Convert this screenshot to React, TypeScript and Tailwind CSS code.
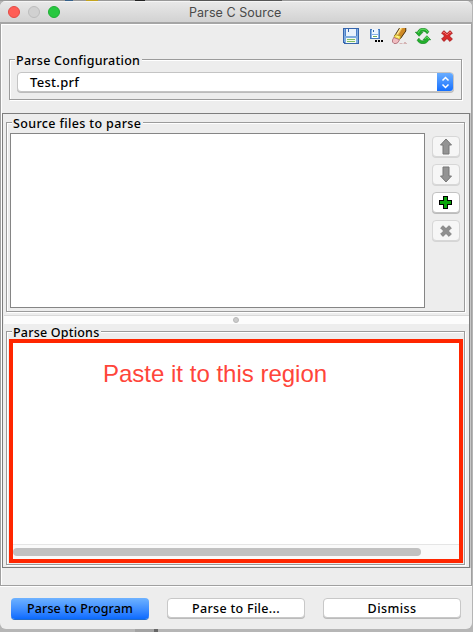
import React from "react";

const ui = "font-['Noto_Sans','Open_Sans',sans-serif] font-medium text-black whitespace-nowrap";
const etched = "border border-[#9b9b9b] shadow-[inset_1px_1px_0_#fff,1px_1px_0_#fff]";

function Group({ title, className, children, titleClass }: { title: string; className: string; titleClass: string; children: React.ReactNode }) {
  return (
    <section className={`${etched} ${className} flex flex-col`}>
      <div className={`${ui} -mt-[8px] h-[16px] shrink-0 self-start bg-[#ededed] text-[12.5px] leading-[17px] ${titleClass}`}>{title}</div>
      {children}
    </section>
  );
}

function SaveIcon() {
  return (
    <svg width="16" height="16" viewBox="0 0 16 16" shapeRendering="crispEdges">
      <path d="M0 0h15l1 1v15H1L0 15z" fill="#3565ad" />
      <path d="M1 1h14v14H2L1 14z" fill="#7eabe0" />
      <path d="M3 1h10v7H3z" fill="#e9f2fc" />
      <path d="M2 1h1v7H2zM13 1h1v7h-1z" fill="#4d80c8" />
      <path d="M5 1h1v3H5z" fill="#3565ad" />
      <path d="M3 10h10v5H3z" fill="#f4faed" />
      <path d="M4 11h8v1H4zM4 13h8v1H4z" fill="#82bd64" />
    </svg>
  );
}

function SaveAsIcon() {
  return (
    <svg width="14" height="16" viewBox="0 0 14 16" shapeRendering="crispEdges">
      <path d="M0 1h10v10H0z" fill="#477abd" />
      <path d="M1 2h8v8H1z" fill="#86b2e5" />
      <path d="M2 1h6v5H2z" fill="#edf5ff" />
      <path d="M3 2h1v2H3z" fill="#356aaa" />
      <path d="M2 7h6v3H2z" fill="#fff" />
      <path d="M3 8h4v1H3z" fill="#6eac58" />
      <path d="M5 12h2v2H5zM8 12h2v2H8zM11 12h2v2h-2z" fill="#000" />
    </svg>
  );
}

function EraserIcon() {
  return (
    <svg width="16" height="16" viewBox="0 0 16 16">
      <path d="M7.5 0h3.2L5 8.5 2.5 8z" fill="#f7c95c" />
      <path d="M10.5 0H14v3L8.5 11 5 8.5z" fill="#d08a24" />
      <path d="M8.8 0 4.5 7" stroke="#fff0a8" fill="none" />
      <path d="M7.5 0 2.5 8M13.8 0v3L8.5 10.5" stroke="#3d2a12" fill="none" strokeWidth=".9" />
      <path d="M3.2 6.5 9 8l-1.5 3.8L1.8 9.5z" fill="#f6e04a" stroke="#8d7220" strokeWidth=".5" />
      <path d="m4.5 8.3 2.5 1" stroke="#fff8b8" />
      <path d="M1.8 9.5 7.5 11.7 6 14.5 4 15.5H2L.5 14v-2z" fill="#f0bcc0" stroke="#a96670" strokeWidth=".8" />
      <path d="M7.5 15.5h3M11.5 15.5H15M12 14.5h2" stroke="#d5b5b5" />
    </svg>
  );
}

function RefreshIcon() {
  return (
    <svg width="16" height="16" viewBox="0 0 16 16" fill="#22b02c" stroke="#0a7d16" strokeWidth=".6">
      <path d="M.3 4.2h2C3.2 1.5 5.5.3 8 .3c2.6 0 4.8 1.3 5.8 3.5l-1.7 2C11 4 9.800 3.200 8.300 3.200c-1.200 0-2 .3-2.400 1.100H7.900L4.100 8.300z" />
      <path d="M15.700 11.800h-2c-.9 2.700-3.200 3.900-5.700 3.900-2.600 0-4.800-1.300-5.800-3.500l1.700-2c1.100 1.800 2.300 2.600 3.800 2.600 1.200 0 2-.3 2.400-1.100H8.100l3.800-4z" />
      <path d="M3.300 4.800C4.200 2 6.200 1.200 8 1.200c2 0 3.700.8 4.600 2.500M9.900 11l2-2.300 2 2.300" fill="none" stroke="#77e873" strokeWidth=".8" />
    </svg>
  );
}

function CloseIcon() {
  return (
    <svg width="12" height="12" viewBox="0 0 12 12">
      <path d="M3 .7 6 3.6 9 .7 11.4 3 8.4 6l3 3L9 11.4 6 8.5l-3 2.9L.6 9l3-3-3-3z" fill="#d82b2b" stroke="#a21416" strokeWidth=".8" />
      <path d="m2 3 1-1 3 3 3-3 1 1" fill="none" stroke="#ef7770" strokeWidth=".9" />
    </svg>
  );
}

function SideButton({ children, enabled = false }: { children: React.ReactNode; enabled?: boolean }) {
  return (
    <button className={`flex h-[21px] w-[28px] items-center justify-center rounded-[4px] border ${enabled ? "border-[#c3c3c3] bg-white shadow-[0_1px_0_#bbb]" : "border-[#d7d7d7] bg-[#f6f6f6] shadow-[0_1px_0_#d5d5d5]"}`}>
      {children}
    </button>
  );
}

export default function App() {
  return (
    <main className="flex h-[632px] w-[473px] flex-col overflow-hidden bg-[#b5b5b5]">
      <div className="flex h-px shrink-0 bg-[#999]">
        <i className="ml-[65px] h-px w-[8px] bg-[#36618a]" />
        <i className="ml-[13px] h-px w-[12px] bg-[#c3a41e]" />
        <i className="ml-[37px] h-px w-[10px] bg-[#222]" />
        <i className="ml-[45px] h-px w-[92px] bg-[#555]" />
      </div>
      <div className="flex h-[628px] w-[472px] shrink-0 flex-col overflow-hidden rounded-[6px] bg-[#ededed]">
        <header className="flex h-[23px] shrink-0 items-center border-b-2 border-[#a5a5a5] bg-linear-to-b from-[#e9e9e9] to-[#d2d2d2] pl-[8px] shadow-[inset_0_1px_0_#f5f5f5]">
          <div className="mt-px flex gap-[8px]">
            <i className="size-[12px] rounded-full border border-[#e24b45] bg-[#ff5e56]" />
            <i className="size-[12px] rounded-full border border-[#bcbcbc] bg-[#d1d1d1]" />
            <i className="size-[12px] rounded-full border border-[#1fae34] bg-[#28c840]" />
          </div>
          <h1 className="ml-[129px] mt-[2px] whitespace-nowrap font-[Inter,sans-serif] text-[12.5px] leading-[16px] tracking-[0.06px] text-[#4a4a4a]">Parse C Source</h1>
        </header>

        <div className="flex h-[562px] shrink-0 flex-col border border-t-0 border-[#a0a0a0] pl-px pr-px shadow-[inset_1px_1px_0_#fff]">
          <div className="flex h-[35px] shrink-0 pl-[341px] pt-[4px]">
            <SaveIcon />
            <span className="ml-[11px]"><SaveAsIcon /></span>
            <span className="ml-[8px]"><EraserIcon /></span>
            <span className="ml-[7px]"><RefreshIcon /></span>
            <span className="ml-[10px] mt-[2px]"><CloseIcon /></span>
          </div>
          <Group title="Parse Configuration" className="ml-[7px] h-[41px] w-[453px] shrink-0" titleClass="ml-[5px] w-[127px] pl-px tracking-[0.26px]">
            <div className="ml-[7px] mt-[4px] flex h-[20px] w-[437px] shrink-0 overflow-hidden rounded-[4px] border border-[#c4c4c4] bg-white shadow-[0_1px_0_#bbb]">
              <span className={`${ui} flex-1 pl-[12px] text-[13px] leading-[19px] tracking-[0.3px]`}>Test.prf</span>
              <span className="-my-px -mr-px flex w-[17px] items-center justify-center bg-linear-to-b from-[#6db0ff] to-[#0a6bff]">
                <svg width="9" height="13" viewBox="0 0 9 13" fill="none" stroke="white" strokeWidth="1.5"><path d="m1.5 4.5 3-3 3 3M1.5 8.5l3 3 3-3" /></svg>
              </span>
            </div>
          </Group>

          <div className="mt-[13px] flex h-[455px] w-[468px] shrink-0 flex-col border border-[#7d7d7d] shadow-[1px_0_0_#c6c6c6]">
            <Group title="Source files to parse" className="ml-[3px] mt-[8px] h-[190px] w-[459px] shrink-0" titleClass="ml-[5px] w-[131px] pl-px tracking-[0.36px]">
              <div className="ml-[3px] mt-[2px] flex">
                <div className="h-[175px] w-[415px] border border-[#858585] bg-white" />
                <div className="ml-[7px] mt-[3px] flex flex-col gap-[7px]">
                  <SideButton><svg width="14" height="17" viewBox="0 0 14 17"><path d="M7 1 12.5 7H10v9H4V7H1.5z" fill="#949494" stroke="#777" /></svg></SideButton>
                  <SideButton><svg width="14" height="17" viewBox="0 0 14 17"><path d="m7 16 5.5-6H10V1H4v9H1.5z" fill="#949494" stroke="#777" /></svg></SideButton>
                  <SideButton enabled><svg className="-ml-px" width="13" height="13" viewBox="0 0 13 13" shapeRendering="crispEdges"><path d="M4 0h5v4h4v5H9v4H4V9H0V4h4z" fill="#000" /><path d="M5 1h3v4h4v3H8v4H5V8H1V5h4z" fill="#0aa50a" /></svg></SideButton>
                  <SideButton><svg width="12" height="12" viewBox="0 0 12 12"><path d="M3 .7 6 3.6 9 .7 11.4 3 8.4 6l3 3L9 11.4 6 8.5l-3 2.9L.6 9l3-3-3-3z" fill="#8f8f8f" stroke="#777" strokeWidth=".7" /></svg></SideButton>
                </div>
              </div>
            </Group>
            <div className="ml-px mt-[3px] flex h-[9px] w-[465px] shrink-0 items-center border-t border-[#d9d9d9] bg-[#fcfcfc] pl-[229px]"><i className="size-[6px] rounded-full border border-[#b8b8b8] bg-[#ccc]" /></div>
            <Group title="Parse Options" className="ml-[3px] mt-[7px] h-[234px] w-[459px] shrink-0" titleClass="ml-[5px] w-[89px] pl-px tracking-[0.2px]">
              <div className="relative z-10 ml-[2px] -mt-px flex h-[224px] w-[454px] shrink-0 flex-col border-4 border-[#ff2600] bg-white">
                <p className="h-[201px] pl-[90px] pt-[17px] font-['Liberation_Sans',sans-serif] text-[24px] leading-[28px] text-[#ff453a]">Paste it to this region</p>
                <div className="flex h-[15px] items-center border-t border-[#e5e5e5] bg-[#fafafa]"><i className="h-[8px] w-[408px] rounded-full bg-[#c1c1c1]" /></div>
              </div>
            </Group>
          </div>
        </div>

        <footer className="flex h-[43px] shrink-0 gap-[18px] border-t border-white pl-[11px] pt-[11px]">
          <button className={`${ui} h-[21px] w-[138px] rounded-[4px] bg-linear-to-b from-[#6eb2ff] to-[#086aff] text-[12.5px] leading-[21px] tracking-[0.1px] shadow-[0_1px_0_#236ccc]`}>Parse to Program</button>
          <button className={`${ui} h-[20px] w-[138px] rounded-[4px] border border-[#c8c8c8] bg-white text-[12.5px] leading-[19px] tracking-[0.3px] shadow-[0_1px_0_#bbb]`}>Parse to File...</button>
          <button className={`${ui} h-[20px] w-[138px] rounded-[4px] border border-[#c8c8c8] bg-white text-[12.5px] leading-[19px] tracking-[0.4px] shadow-[0_1px_0_#bbb]`}>Dismiss</button>
        </footer>
      </div>
      <div className="flex h-[3px] bg-[#b6b6b6] pl-[135px]"><i className="h-[3px] w-[19px] bg-[#a3a3a3]" /><i className="h-[3px] w-[4px] bg-[#666]" /></div>
    </main>
  );
}
